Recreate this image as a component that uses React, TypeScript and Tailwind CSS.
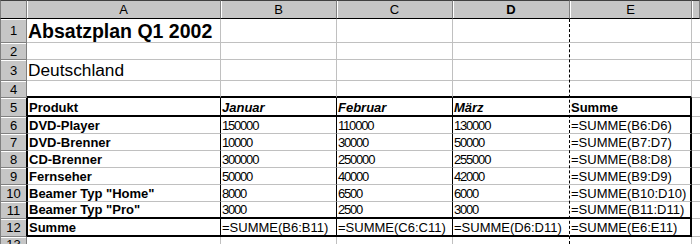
import React from 'react'

type Row = {
  n: number
  cells: string[]
  style?: string[]
}

const rows: Row[] = [
  { n: 1, cells: ['Absatzplan Q1 2002', '', '', '', ''], style: ['title', '', '', '', ''] },
  { n: 2, cells: ['', '', '', '', ''] },
  { n: 3, cells: ['Deutschland', '', '', '', ''], style: ['sub', '', '', '', ''] },
  { n: 4, cells: ['', '', '', '', ''] },
  { n: 5, cells: ['Produkt', 'Januar', 'Februar', 'März', 'Summe'], style: ['b', 'bi', 'bi', 'bi', 'b'] },
  { n: 6, cells: ['DVD-Player', '150000', '110000', '130000', '=SUMME(B6:D6)'], style: ['b', 'num', 'num', 'num', ''] },
  { n: 7, cells: ['DVD-Brenner', '10000', '30000', '50000', '=SUMME(B7:D7)'], style: ['b', 'num', 'num', 'num', ''] },
  { n: 8, cells: ['CD-Brenner', '300000', '250000', '255000', '=SUMME(B8:D8)'], style: ['b', 'num', 'num', 'num', ''] },
  { n: 9, cells: ['Fernseher', '50000', '40000', '42000', '=SUMME(B9:D9)'], style: ['b', 'num', 'num', 'num', ''] },
  { n: 10, cells: ['Beamer Typ "Home"', '8000', '6500', '6000', '=SUMME(B10:D10)'], style: ['b', 'num', 'num', 'num', ''] },
  { n: 11, cells: ['Beamer Typ "Pro"', '3000', '2500', '3000', '=SUMME(B11:D11)'], style: ['b', 'num', 'num', 'num', ''] },
  { n: 12, cells: ['Summe', '=SUMME(B6:B11)', '=SUMME(C6:C11)', '=SUMME(D6:D11)', '=SUMME(E6:E11)'], style: ['b', '', '', '', ''] },
  { n: 13, cells: ['', '', '', '', ''] },
]

const textStyle = (s?: string) => {
  if (s === 'title') return 'text-[19.5px] font-bold leading-[22px]'
  if (s === 'sub') return 'text-[17.3px] leading-[20px]'
  if (s === 'b') return 'font-bold'
  if (s === 'bi') return 'font-bold italic'
  if (s === 'num') return 'tracking-[-1.2px]'
  return ''
}

const borderFor = (r: number, c: number) => {
  const inTable = r >= 5 && r <= 12
  const thickBottom = r === 4 || r === 5 || r === 11 || r === 12
  let right = 'border-r border-r-[#c0c0c0]'
  if (c === 3) right = 'border-r border-r-white'
  else if (inTable && c === 4) right = 'border-r-2 border-r-black'
  else if (inTable) right = 'border-r border-r-black'
  const bottom = thickBottom ? 'border-b-2 border-b-black' : 'border-b border-b-[#c0c0c0]'
  const left = inTable && c === 0 ? 'border-l border-l-black' : ''
  return `${right} ${bottom} ${left}`
}

export default function App() {
  return (
    <div
      className="relative h-[244px] w-[700px] overflow-hidden bg-white text-[13px] leading-[15px] text-black"
      style={{ fontFamily: '"Liberation Sans", Arial, sans-serif' }}
    >
      <div className="grid grid-cols-[27px_194px_116px_116px_117px_122px_1fr] grid-rows-[19px_24px_17px_21px_17px_19px_17px_17px_17px_17px_17px_17px_18px_1fr] h-full">
        {/* column header */}
        <div className="border-t border-l border-t-[#404040] border-l-[#808080] border-r border-r-[#808080] border-b border-b-black bg-[#c6c6c6]" />
        {['A', 'B', 'C', 'D', 'E', ''].map((l) => (
          <div
            key={l || 'F'}
            className={`flex items-center justify-center border-t border-t-[#404040] border-r border-r-[#808080] border-b border-b-black bg-[#c6c6c6] shadow-[inset_1px_0_0_#ffffff] ${l === 'D' ? 'font-bold' : ''}`}
          >
            {l}
          </div>
        ))}

        {rows.map((row) => (
          <React.Fragment key={row.n}>
            <div
              className={`flex items-center justify-center border-l border-l-[#808080] border-b border-b-[#808080] bg-[#c6c6c6] shadow-[inset_0_1px_0_#ffffff] ${
                row.n >= 5 && row.n <= 12 ? 'border-r border-r-black' : 'border-r border-r-[#808080]'
              }`}
            >
              {row.n}
            </div>
            {row.cells.map((v, c) => (
              <div
                key={c}
                className={`flex items-end overflow-visible whitespace-nowrap pl-[1px] ${borderFor(row.n, c)}`}
              >
                <span className={textStyle(row.style?.[c])}>{v}</span>
              </div>
            ))}
            <div className="border-b border-b-[#c0c0c0]" />
          </React.Fragment>
        ))}
      </div>

      {/* page break */}
      <div className="absolute left-[569px] top-[19px] bottom-0 w-0 border-l border-dashed border-l-black" />
    </div>
  )
}
